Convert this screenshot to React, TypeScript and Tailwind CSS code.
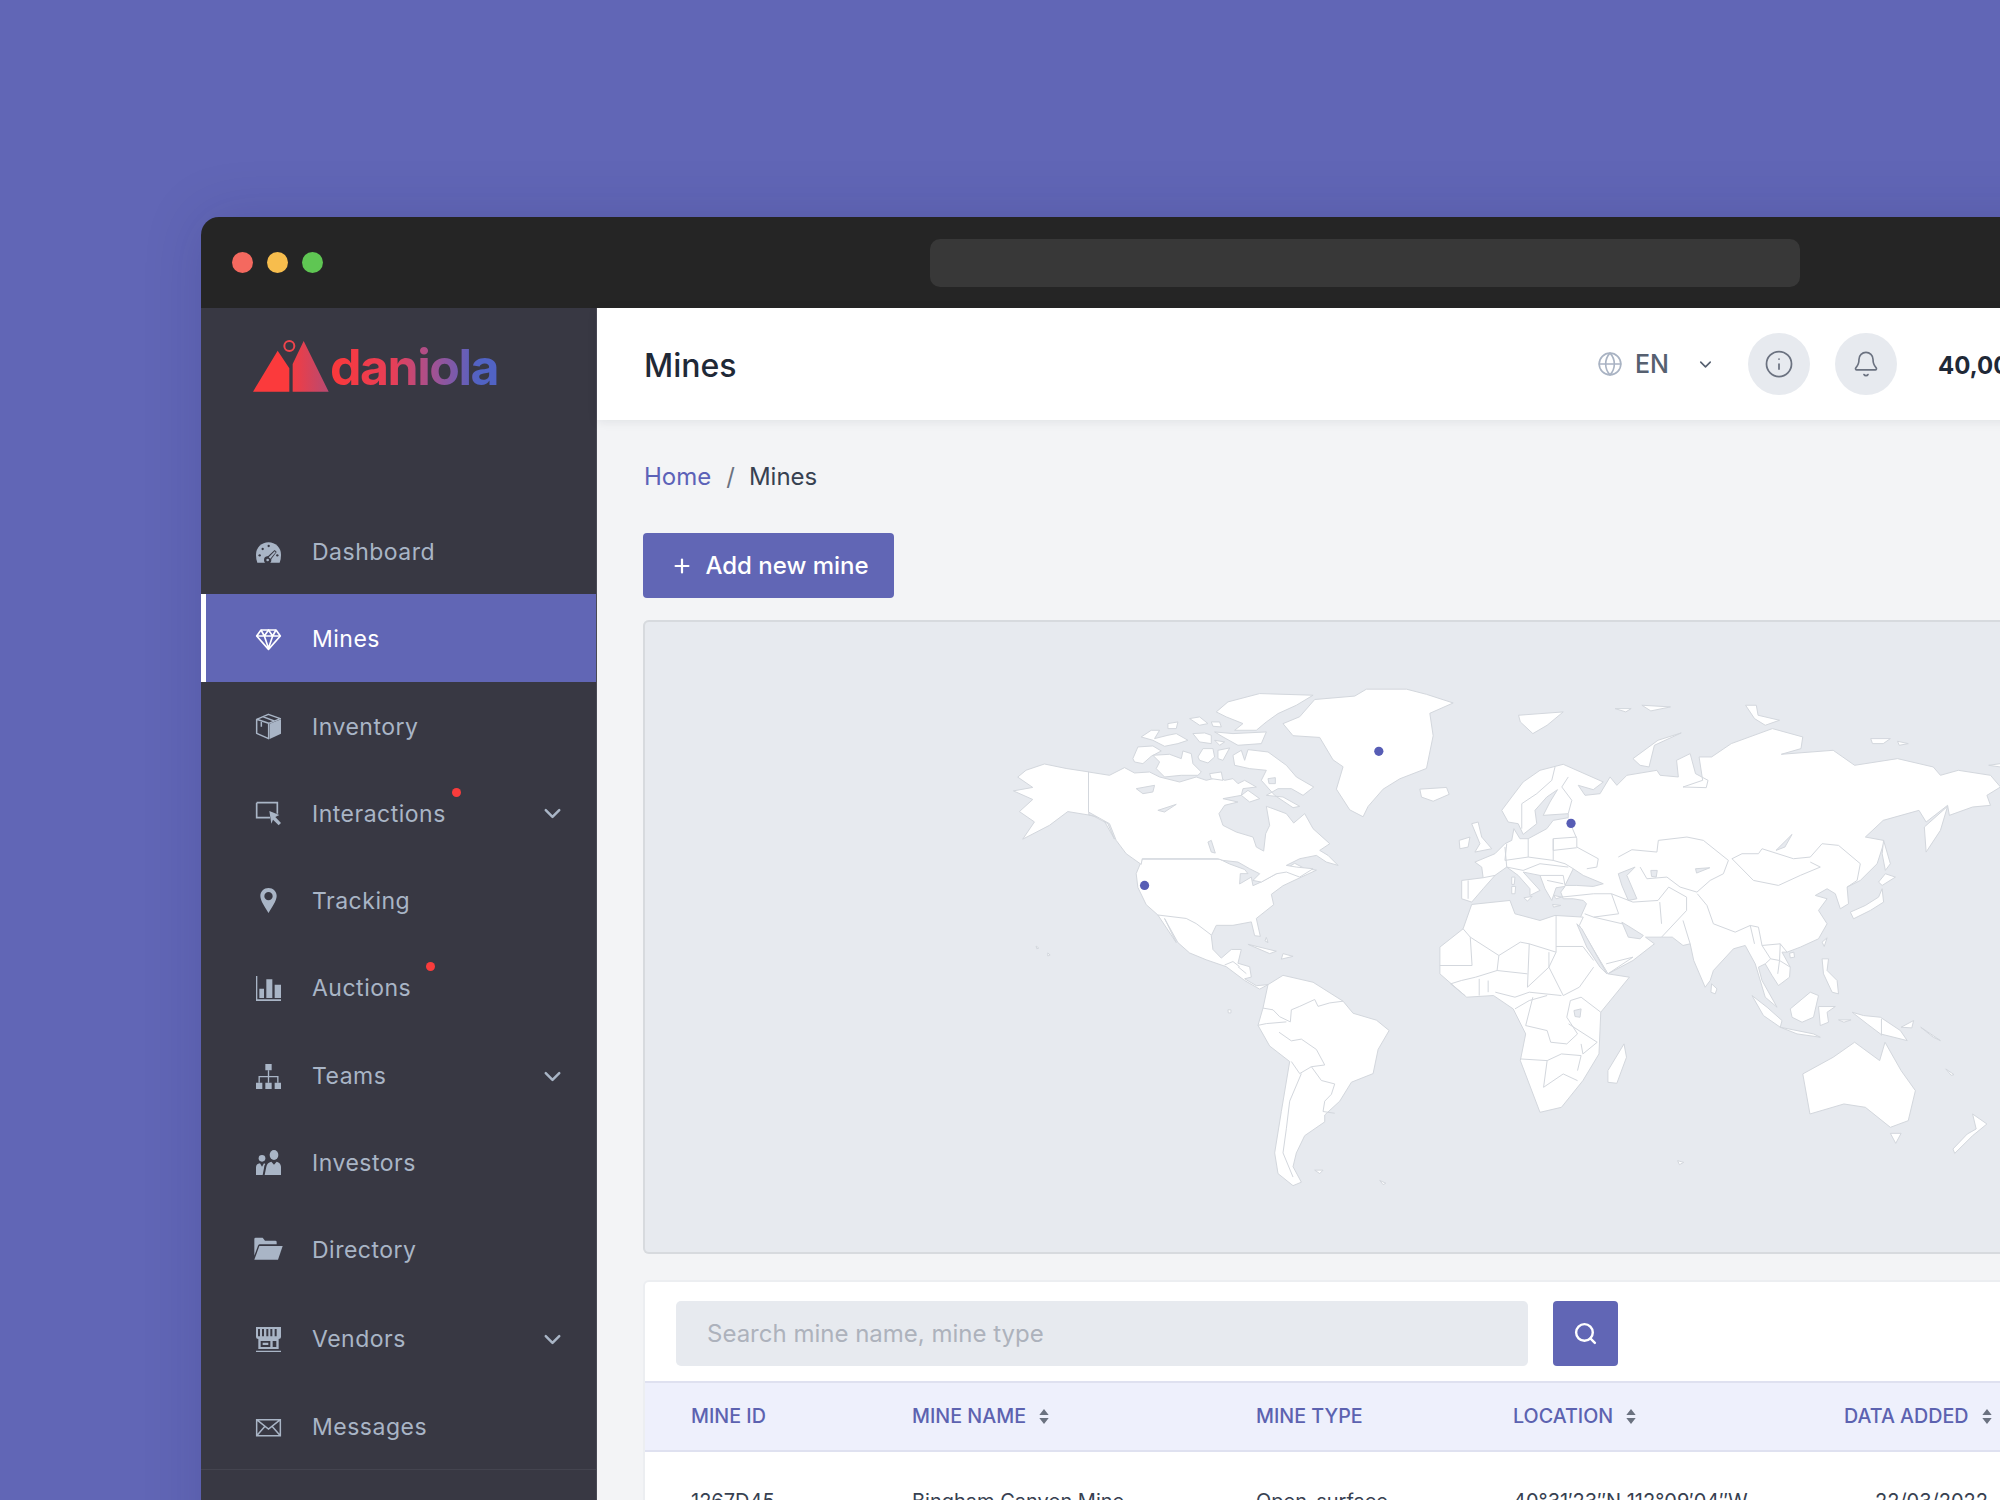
import { Bell, ChevronDown, Globe, Info, Plus, Search } from "lucide-react";
import type { ReactNode } from "react";

const DARK = "#383843";

function Ico({ children }: { children: ReactNode }) {
  return (
    <svg viewBox="0 0 75 75" className="w-[25px] h-[25px] shrink-0 overflow-visible" fill="currentColor">
      {children}
    </svg>
  );
}

const icons: Record<string, ReactNode> = {
  gauge: (
    <Ico>
      <path d="M4 68Q0 60 0 44A37.5 37.5 0 0 1 75 44Q75 60 71 68Z" />
      <g fill={DARK}>
        <circle cx="11" cy="46" r="3.5" />
        <circle cx="20" cy="27" r="3.5" />
        <circle cx="38" cy="18" r="3.5" />
        <circle cx="64" cy="46" r="3.5" />
        <path d="M30 54L56 30L62 36L42 62Z" />
        <circle cx="35" cy="60" r="11" />
      </g>
      <path d="M38 52L56 34L59 37L43 56Z" />
      <circle cx="35" cy="60" r="4" />
    </Ico>
  ),
  diamond: (
    <Ico>
      <g fill="none" stroke="currentColor" strokeWidth="5" strokeLinejoin="round">
        <path d="M15 9H60L73 27L37.5 67L2 27Z" />
        <path d="M2 27H73M15 9L25 27L37.5 64L50 27L60 9M25 27L37.5 9L50 27" />
      </g>
    </Ico>
  ),
  box: (
    <Ico>
      <path d="M41 29L75 16V59L41 75Z" />
      <g fill="none" stroke="currentColor" strokeWidth="4.5" strokeLinejoin="round">
        <path d="M2 16L37 1L73 14L38 28ZM2 16V58L38 74V28M20 8L55 21M16 24V38" />
      </g>
    </Ico>
  ),
  cursor: (
    <Ico>
      <path d="M2 5H64V38M42 50H2V5" fill="none" stroke="currentColor" strokeWidth="5" />
      <path d="M40 30L70 42L58 48L75 66L68 73L51 56L46 68Z" />
    </Ico>
  ),
  pin: (
    <Ico>
      <path
        fillRule="evenodd"
        d="M37.5 0C51 0 62 10 62 24C62 38 48 58 37.5 75C27 58 13 38 13 24C13 10 24 0 37.5 0ZM37.5 12A12.5 12.5 0 1 0 37.5 37A12.5 12.5 0 1 0 37.5 12Z"
      />
    </Ico>
  ),
  bars: (
    <Ico>
      <path d="M0 0H4V70H75V75H0Z" />
      <path d="M10 38H24V66H10ZM31 10H49V66H31ZM56 26H75V66H56Z" />
    </Ico>
  ),
  org: (
    <Ico>
      <path d="M28 0H47V19H28ZM0 56H19V75H0ZM28 56H47V75H28ZM56 56H75V75H56Z" />
      <path d="M35.5 19H39.5V36H67.5V56H63.5V40H39.5V56H35.5V40H11.5V56H7.5V36H35.5Z" />
    </Ico>
  ),
  people: (
    <Ico>
      <circle cx="18" cy="25" r="10" />
      <path d="M0 75V52Q0 42 12 40L18 50L24 40L28 42Q24 46 24 54L20 75Z" />
      <ellipse cx="54" cy="15" rx="13" ry="15" />
      <path d="M26 75L31 50Q33 38 46 35L54 44L62 35Q74 38 75 50V75Z" />
    </Ico>
  ),
  folder: (
    <Ico>
      <path d="M-5 56V6Q-5 2 -1 2H20L27 11H58Q62 11 62 15V22H12Q8 22 6 26Z" />
      <path d="M10 27H80L66 68H-5Z" />
    </Ico>
  ),
  store: (
    <Ico>
      <path
        fillRule="evenodd"
        d="M0 0H75V30Q75 36 68 36V66H7V36Q0 36 0 30ZM6 6V28H12V6ZM18 6V28H24V6ZM31 6V28H37V6ZM43 6V28H49V6ZM56 6V28H62V6ZM14 42V60H43V42ZM50 42V60H61V42Z"
      />
      <path d="M20 47H37V54H20ZM0 71H75V75H0Z" />
    </Ico>
  ),
  mail: (
    <Ico>
      <g fill="none" stroke="currentColor" strokeWidth="4.5">
        <path d="M2 14H73V62H2ZM2 14L37.5 42L73 14M2 62L27 34M73 62L48 34" />
      </g>
    </Ico>
  ),
};

const nav = [
  { label: "Dashboard", icon: "gauge", h: "h-[86px]" },
  { label: "Mines", icon: "diamond", active: true, h: "h-[88px]" },
  { label: "Inventory", icon: "box", h: "h-[87px]" },
  { label: "Interactions", icon: "cursor", dot: "-right-[15px]", chevron: true, h: "h-[87px]" },
  { label: "Tracking", icon: "pin", h: "h-[87px]" },
  { label: "Auctions", icon: "bars", dot: "-right-[24px]", h: "h-[88px]" },
  { label: "Teams", icon: "org", chevron: true, h: "h-[88px]" },
  { label: "Investors", icon: "people", h: "h-[85px]" },
  { label: "Directory", icon: "folder", h: "h-[89px]" },
  { label: "Vendors", icon: "store", chevron: true, h: "h-[90px]" },
  { label: "Messages", icon: "mail", h: "h-[86px]" },
];

function Logo() {
  return (
    <div className="flex items-end h-[52px]">
      <svg viewBox="188 420 228 156" className="w-[76px] h-[52px] shrink-0">
        <defs>
          <linearGradient id="logoGrad" x1="188" y1="0" x2="416" y2="0" gradientUnits="userSpaceOnUse">
            <stop offset="0.45" stopColor="#fb3a3c" />
            <stop offset="1" stopColor="#b74a72" />
          </linearGradient>
        </defs>
        <path d="M188 575L262 452L297 505V575ZM307 575V492L340 423L415 575Z" fill="url(#logoGrad)" />
        <circle cx="297" cy="438" r="15" fill="none" stroke="#f0444c" strokeWidth="6" />
      </svg>
      <span className="ml-[1px] mb-[-1px] text-[50px] leading-[52px] font-bold tracking-[-1.5px] text-transparent bg-clip-text bg-[linear-gradient(90deg,#fb383a_0%,#e63f58_38%,#a05294_62%,#5163c4_88%)] font-['Inter',sans-serif]">
        daniola
      </span>
    </div>
  );
}

function Sidebar() {
  return (
    <aside className="w-[396px] shrink-0 bg-[#383843] border-r border-[#4a4a55] font-['Inter',sans-serif]">
      <div className="h-[200px] pl-[52px] pt-[32px]">
        <Logo />
      </div>
      {nav.map((item) => (
        <div
          key={item.label}
          className={`flex items-center pt-[2px] pr-[30px] text-[23px] tracking-[0.5px] ${item.h} ${
            item.active
              ? "bg-[#6166b5] text-white border-l-[5px] border-white pl-[50px]"
              : "text-[#a9b5c6] pl-[55px]"
          }`}
        >
          {icons[item.icon]}
          <span className="relative ml-[31px] leading-[30px] font-normal">
            {item.label}
            {item.dot && (
              <span className={`absolute -top-[11px] w-[9px] h-[9px] rounded-full bg-[#f93c3c] ${item.dot}`} />
            )}
          </span>
          {item.chevron && <ChevronDown className="ml-auto w-[27px] h-[27px]" strokeWidth={2.2} />}
        </div>
      ))}
      <div className="border-t border-[#44444f] h-[60px]" />
    </aside>
  );
}

function SortArrows() {
  return (
    <svg viewBox="0 0 10 16" className="w-[10px] h-[15px] ml-[13px] shrink-0" fill="#6b7280">
      <path d="M5 0L10 6.5H0ZM5 16L0 9.5H10Z" />
    </svg>
  );
}

const MAP_BG = "#e7eaef";

// western half, scaled up from the map
const americas = [
  // alaska
  "M42,350L100,340L55,310L80,290L135,272L200,285L268,295V420L310,430L345,490L325,445L280,422L205,410L150,450L70,490L105,440L60,410L100,375Z",
  // usa + central america
  "M428,548H660L690,562L735,578L745,590L722,590L720,620L755,600L760,625L785,614L860,575L885,560L915,575L950,580L905,600L850,625L815,650L822,680L770,720L782,772L765,770L755,730L700,740L650,740L635,770L640,810L665,835L695,810L725,810L715,850L750,860L755,890L735,895L770,915L805,912L780,925L735,900L680,860L620,840L570,820L535,790L495,720L530,790L475,710L440,680L415,630L410,590Z",
  // south america
  "M805,912L850,885L940,905L1030,960L1060,995L1130,1015L1168,1045L1135,1100L1120,1170L1055,1195L1020,1250L975,1290L975,1310L915,1350L890,1400L880,1440L905,1485L880,1495L835,1460L825,1400L845,1280L870,1135L810,1090L775,1030L790,980Z",
  // greenland, iceland
  "M850,155L900,135L945,85L1065,75L1100,55L1220,55L1280,70L1360,95L1290,125L1300,190L1280,285L1200,315L1150,345L1105,395L1090,425L1050,405L1010,345L1030,280L1000,260L960,195L880,190Z",
  "M1260,345L1340,340L1348,360L1300,380L1265,368Z",
  // caribbean, small islands
  "M745,795L830,815L810,822ZM850,822L880,830L845,838ZM800,775L805,790L796,785ZM110,800L118,806L112,808ZM145,820L152,826L145,829Z",
  "M685,985L694,985L694,994L686,994ZM945,1450L970,1450L960,1460ZM1140,1480L1158,1488L1150,1492Z",
];

const americaBorders = [
  "M475,710L560,720L590,735L635,768",
  "M675,855L700,845L720,860M715,860L740,880",
  "M790,980L820,985L840,1005L872,1020L875,985L900,975L945,955L955,975L990,965L1030,960",
  "M775,1030L800,1025L860,1020M838,1050L875,1075L905,1070L950,1100L975,1145L935,1150L900,1170L875,1135",
  "M905,1170L870,1250L860,1330L850,1400L880,1470",
  "M935,1150L965,1190L1005,1200L995,1230L975,1250L970,1280L1005,1285",
];

// canada, traced at 3x of the page
const canada = [
  "M-63,275L0,285L45,262L75,278L120,275L150,290L210,305L260,290L290,300L330,290L345,300L370,295L385,310L405,300L440,320L400,325L395,345L340,355L385,365L345,375L328,400L340,435L380,455L430,470L440,500L462,512L468,460L480,435L470,378L490,385L530,400L552,428L585,400L610,445L660,490L630,510L655,525L685,555L650,545L620,525L570,535L530,555L560,560L610,565L570,590L530,575L500,580L455,605L430,600L450,580L420,565L385,545L340,540L325,535H98L95,552L50,520L20,480L0,430L-63,395Z",
  "M70,235L85,200L130,197L155,212L125,228L100,250L75,245Z",
  "M130,225L180,222L215,235L220,212L245,220L250,250L275,275L265,285L215,285L165,290L140,265L150,245Z",
  "M95,170L125,150L150,150L135,175L175,165L200,160L235,180L205,190L165,198L130,180Z",
  "M265,230L280,205L310,205L315,230L295,248L270,240Z",
  "M325,210L360,203L340,240L325,235Z",
  "M240,115L270,110L295,130L270,135Z",
  "M175,130L205,125L200,145L175,145Z",
  "M250,160L285,158L305,165L305,190L270,185Z",
  "M315,180L345,185L330,195Z",
  "M305,125L330,125L335,140L310,138Z",
  "M320,95L355,65L450,40L610,45L560,75L505,100L470,125L440,150L375,150L400,130L350,110Z",
  "M315,155L370,160L470,155L455,190L385,195L340,170Z",
  "M370,225L395,210L405,240L415,208L475,215L530,255L560,290L612,320L580,345L545,325L505,325L470,345L520,350L570,378L550,382L495,345L455,300L470,270L420,265L375,255Z",
  "M395,345L415,330L450,355L420,365Z",
  "M300,280L335,275L340,300L305,295Z",
];

const canadaLakes = [
  "M80,325L135,315L130,335L100,340Z",
  "M145,390L200,372L165,395Z",
  "M295,485L305,480L317,518L305,515Z",
  "M475,295L497,292L497,310L478,310Z",
];

// eastern half
const eurasia = [
  "M61,600L121,592L117,560L98,545L154,520L182,490L201,480L207,445L224,475L247,475L299,445L317,420L359,412L359,400L289,405L308,365L329,328L299,350L266,390L271,430L233,462L219,430L191,425L173,390L201,350L233,305L280,270L345,252L457,305L429,328L387,315L406,345L448,340L476,290L495,315L523,285L607,270L616,285L667,290L662,240L700,220L715,280L750,300L745,322L680,320L735,300L725,230L760,230L815,190L930,145L1015,170L1010,205L955,222L1100,210L1160,255L1280,235L1380,260L1400,285L1450,270L1540,285L1568,320L1530,345L1540,375L1490,380L1425,405L1420,375L1360,425L1340,390L1240,420L1190,470L1241,480L1241,490L1223,550L1176,600L1139,620L1143,670L1120,685L1106,640L1083,625L1050,645L1083,655L1059,690L1083,730L1059,775L1008,800L971,815L957,815L980,860L978,890L947,915L929,885L910,850L891,860L901,900L943,980L910,950L882,850L854,795L821,805L765,870L756,900L742,920L710,840L700,790L680,795L650,770L620,770L575,770L600,790L540,840L470,880L430,810L385,730L410,670L401,660L373,655L345,655L338,635L350,618L325,622L313,660L294,625L280,585L233,575L280,630L252,645L252,625L219,585L187,560L154,585L121,625L89,665L61,655Z",
  // africa
  "M89,672L196,660L210,700L280,720L322,705L401,710L390,735L470,880L530,890L450,995L445,1120L400,1200L340,1280L280,1295L225,1140L240,1060L205,985L150,945L75,950L0,880L0,800L65,745Z",
  // australia etc
  "M1015,1180L1100,1130L1160,1085L1230,1140L1245,1085L1290,1170L1330,1230L1310,1320L1260,1340L1190,1280L1130,1270L1035,1300Z",
  "M470,1170L515,1090L522,1130L495,1208L470,1205Z",
  "M1490,1300L1530,1330L1490,1365L1440,1418L1435,1405L1475,1360L1500,1345Z",
  "M1260,1358H1290L1275,1388Z",
  // islands of asia
  "M873,945L915,980L957,1020L952,1040L905,1005Z",
  "M952,1040L1045,1060L1064,1070L999,1060Z",
  "M980,985L1036,935L1059,945L1045,1010L1013,1025L985,1010Z",
  "M1059,978L1106,978L1083,995L1087,1025L1064,1035Z",
  "M1153,995L1185,1005L1232,1010L1288,1050L1307,1080L1232,1060L1195,1030Z",
  "M1069,835L1087,835L1083,870L1111,900L1115,940L1097,935L1073,880Z",
  "M1148,695L1190,675L1227,650L1237,625L1241,665L1204,690L1157,715Z",
  "M1227,605L1246,580L1274,590L1237,615Z",
  "M1241,480L1260,550L1246,570L1237,520Z",
  "M1355,440L1420,378L1400,450L1360,515Z",
  "M760,910L775,925L770,940L758,935Z",
  "M1069,785L1083,772L1075,798Z",
  "M978,818L990,815L992,830L980,832Z",
  // europe's islands, arctic
  "M89,430L107,425L117,470L145,505L98,515L112,490Z",
  "M54,480L84,470L79,500L56,505Z",
  "M220,105L345,95L300,135L260,160L225,125Z",
  "M540,235L610,180L675,158L600,195L585,260L560,255Z",
  "M855,75L885,75L890,105L950,120L910,135L880,115Z",
  "M1205,175L1260,175L1240,190L1210,190ZM1280,183L1310,190L1285,195ZM1535,255L1568,250V260Z",
  "M490,85L535,85L520,95ZM565,75L645,80L590,92Z",
  "M1290,1040L1325,1020L1320,1042ZM1115,1018H1150L1130,1025ZM1345,1040L1400,1080L1380,1070ZM1415,1165L1438,1182L1430,1184Z",
  "M201,590L210,590L208,612L201,612ZM201,618L212,618L210,640L201,640ZM235,652L258,648L245,662ZM315,672L338,675L318,680ZM318,645L340,650L325,655ZM665,1440L682,1445L670,1452Z",
];

const eurasiaSeas = [
  "M350,615L373,565L401,585L457,610L429,618L383,615Z",
  "M499,580L546,560L523,585L551,655L527,660L509,615Z",
  "M509,725L532,740L569,765L560,775L527,770Z",
  "M383,730L397,745L467,880L448,860L411,800Z",
  "M940,510L985,462L965,500Z",
  "M715,565L755,562L718,578Z",
  "M590,570L608,570L605,590L592,588Z",
  "M375,990L395,985L392,1010L378,1008Z",
];

const eurasiaBorders = [
  // europe
  "M322,260L313,300L271,340L229,370L229,445",
  "M359,290L341,320L369,360L359,400",
  "M359,415L383,475L383,500L443,535L439,560L411,565",
  "M317,475L383,470M317,475V510L383,502M317,540L350,550L373,565",
  "M247,475V530L317,540V475M187,490L182,540L247,530",
  "M187,560L233,570L280,550L359,560M182,500L187,560",
  "M280,585L308,585L345,585L350,615M300,600L345,610",
  "M79,600V655M121,592L154,585",
  // central asia
  "M499,530L537,508L607,515L611,480L691,470L737,480L807,540L793,580L756,600L719,635L672,620L635,590L579,595L560,560",
  "M480,640L540,665L610,660L640,620L690,650L690,690L620,770",
  "M615,665L620,730M680,720L700,790",
  "M340,650L430,640L480,640L500,700L430,710L405,700M430,710L510,730",
  // russia / mongolia / china
  "M817,535L845,520L891,520L901,505L989,535L1036,530L1069,490L1115,495L1176,550L1167,600L1139,620",
  "M817,535L877,600L947,615L1008,585L1064,560L1036,545",
  "M747,675L765,730L826,755L868,735L891,740L901,795L952,790L971,815",
  "M720,640L747,675",
  "M868,735L880,790M901,795L925,835L910,850M952,790L950,840L980,860M925,835L950,840L945,880",
  "M470,880L540,830L465,850",
  // africa
  "M65,745L85,770L165,825L225,785L250,790L325,815V705M325,798H400L430,840M250,790L245,920L305,860L305,815M325,815L305,860L345,945L390,920L430,860",
  "M85,770L90,855H0M165,825L160,870L100,890L60,900L30,910L70,945M110,895V945M135,900V935M160,870L245,880M155,935L210,950L250,935L340,945",
  "M210,985L250,960L300,945M260,950L240,1035L300,1050L310,1085L355,1090L385,1060L355,1010L365,960L395,950L450,995",
  "M360,1030L440,1085L400,1120L395,1090M225,1135L300,1140L340,1120L395,1125L385,1170M300,1140L290,1220L345,1180L385,1200",
  "M1235,1015V1065",
];

function WorldMap() {
  return (
    <svg viewBox="644 620 1810 633" className="block w-full h-full">
      <g fill="#ffffff" stroke="#d3d7dd" strokeWidth="1" strokeLinejoin="round">
        <g transform="translate(1000 670) scale(0.3333 0.3444)">
          {americas.map((d, i) => <path key={i} d={d} vectorEffect="non-scaling-stroke" />)}
          {americaBorders.map((d, i) => <path key={i} d={d} fill="none" vectorEffect="non-scaling-stroke" />)}
        </g>
        <g transform="translate(1110 680) scale(0.3333)">
          {canada.map((d, i) => <path key={i} d={d} vectorEffect="non-scaling-stroke" />)}
          {canadaLakes.map((d, i) => <path key={i} d={d} fill={MAP_BG} vectorEffect="non-scaling-stroke" />)}
        </g>
        <g transform="translate(1440 680) scale(0.35714 0.3333)">
          {eurasia.map((d, i) => <path key={i} d={d} vectorEffect="non-scaling-stroke" />)}
          {eurasiaSeas.map((d, i) => <path key={i} d={d} fill={MAP_BG} vectorEffect="non-scaling-stroke" />)}
          {eurasiaBorders.map((d, i) => <path key={i} d={d} fill="none" vectorEffect="non-scaling-stroke" />)}
        </g>
      </g>
      <g fill="#575db5">
        <circle cx="1379" cy="751" r="4.6" />
        <circle cx="1145" cy="885" r="4.6" />
        <circle cx="1571" cy="823" r="4.6" />
      </g>
    </svg>
  );
}

function Header() {
  return (
    <header className="relative h-[112px] shrink-0 bg-white flex items-center pl-[47px] shadow-[0_2px_10px_rgba(17,24,39,0.08)]">
      <h1 className="w-[953px] pt-[3px] text-[32px] font-medium text-[#1f2937]">Mines</h1>
      <Globe className="w-[26px] h-[26px] text-[#a9b3c3]" strokeWidth={1.5} />
      <span className="ml-[12px] pt-[2px] text-[25px] font-medium text-[#566070]">EN</span>
      <ChevronDown className="ml-[27px] w-[19px] h-[19px] text-[#566070]" strokeWidth={2} />
      <div className="ml-[33px] w-[62px] h-[62px] rounded-full bg-[#e7eaef] flex items-center justify-center">
        <Info className="w-[30px] h-[30px] text-[#6b7280]" strokeWidth={1.4} />
      </div>
      <div className="ml-[25px] w-[62px] h-[62px] rounded-full bg-[#e7eaef] flex items-center justify-center">
        <Bell className="w-[28px] h-[28px] text-[#6b7280]" strokeWidth={1.4} />
      </div>
      <span className="ml-[41px] pt-[4px] text-[24px] font-bold text-[#1f2937] whitespace-nowrap">40,000 USD</span>
    </header>
  );
}

function MineTable() {
  const cols = "grid grid-cols-[221px_344px_257px_331px_200px] pl-[46px] items-center";
  return (
    <div className="mt-[26px] bg-white border-2 border-[#eceef1] border-b-0 rounded-t-[6px]">
      <div className="flex pt-[19px] pl-[31px] gap-[25px]">
        <div className="w-[852px] h-[65px] rounded-[5px] bg-[#e7eaef] pl-[31px] flex items-center text-[24px] text-[#adb2bc]">
          Search mine name, mine type
        </div>
        <div className="w-[65px] h-[65px] rounded-[4px] bg-[#6166b5] flex items-center justify-center">
          <Search className="w-[25px] h-[25px] text-white" strokeWidth={2.3} />
        </div>
      </div>
      <div className={`${cols} mt-[15px] h-[71px] bg-[#eef0fc] border-y-2 border-[#dfe1f0] text-[19.7px] font-medium text-[#5c62b0]`}>
        <span>MINE ID</span>
        <span className="flex items-center">MINE NAME<SortArrows /></span>
        <span>MINE TYPE</span>
        <span className="flex items-center">LOCATION<SortArrows /></span>
        <span className="flex items-center whitespace-nowrap">DATA ADDED<SortArrows /></span>
      </div>
      <div className={`${cols} pt-[34px] pb-[30px] text-[20px] text-[#374151]`}>
        <span>1267D45</span>
        <span>Bingham Canyon Mine</span>
        <span>Open-surface</span>
        <span className="whitespace-nowrap">40°31′23″N 112°09′04″W</span>
        <span className="pl-[31px]">22/03/2022</span>
      </div>
    </div>
  );
}

export default function App() {
  return (
    <div className="w-[2000px] h-[1500px] overflow-hidden bg-[#6166b6] pt-[217px] pl-[201px] font-['Inter',sans-serif]">
      <div className="w-[2300px] h-[1400px] rounded-t-[18px] overflow-hidden flex flex-col shadow-[0_0_60px_rgba(30,30,80,0.15)]">
        <div className="h-[91px] shrink-0 bg-[#252525] flex items-center pl-[31px]">
          <span className="w-[21px] h-[21px] rounded-full bg-[#f4695f]" />
          <span className="ml-[14px] w-[21px] h-[21px] rounded-full bg-[#f7bd4d]" />
          <span className="ml-[14px] w-[21px] h-[21px] rounded-full bg-[#5fc653]" />
          <div className="ml-[607px] w-[870px] h-[48px] rounded-[10px] bg-[#383838]" />
        </div>
        <div className="flex flex-1 min-h-0">
          <Sidebar />
          <main className="flex-1 min-w-0 flex flex-col bg-[#f3f4f6]">
            <Header />
            <div className="px-[46px] pt-[41px]">
              <div className="flex items-center h-[32px] pl-[1px] text-[24px] leading-[32px]">
                <span className="text-[#5c62b8]">Home</span>
                <span className="ml-[15px] text-[#6b7280]">/</span>
                <span className="ml-[14px] text-[#374151]">Mines</span>
              </div>
              <button className="mt-[40px] w-[251px] h-[65px] pl-[3px] rounded-[4px] bg-[#6166b5] flex items-center justify-center text-[24px] font-medium text-white">
                <Plus className="w-[22px] h-[22px] mr-[12px]" strokeWidth={2.4} />
                Add new mine
              </button>
              <div className="mt-[22px] h-[634px] rounded-[6px] bg-[#e7eaef] ring-2 ring-inset ring-[#d7dade]">
                <WorldMap />
              </div>
              <MineTable />
            </div>
          </main>
        </div>
      </div>
    </div>
  );
}
